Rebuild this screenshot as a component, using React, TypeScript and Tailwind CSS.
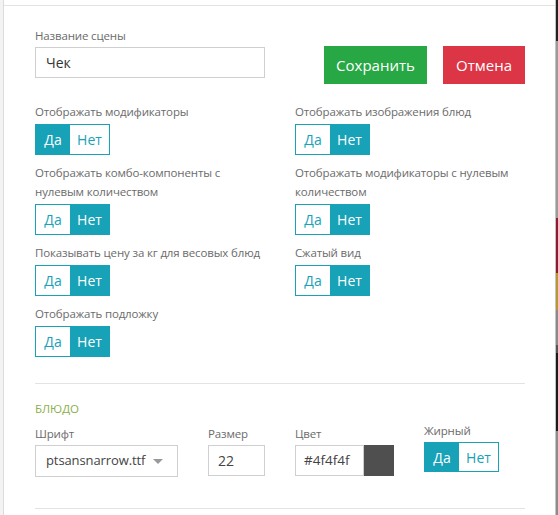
import React from "react";

const font = { fontFamily: '"Open Sans", "Noto Sans", sans-serif' };

function Toggle({ value }: { value: boolean }) {
  return (
    <div className="flex h-[31px] w-[75px] border border-[#17a2b8] text-[14px]">
      <div
        className={`flex w-[34px] items-center justify-center ${
          value ? "bg-[#17a2b8] text-white" : "bg-white text-[#17a2b8]"
        }`}
      >
        Да
      </div>
      <div
        className={`flex flex-1 items-center justify-center ${
          value ? "bg-white text-[#17a2b8]" : "bg-[#17a2b8] text-white"
        }`}
      >
        Нет
      </div>
    </div>
  );
}

function Option({ label, value }: { label: React.ReactNode; value: boolean }) {
  return (
    <div className="flex flex-col">
      <div className="mb-[3px] text-[11.5px] leading-[19px] tracking-[-0.15px] text-[#6b6b6b] whitespace-nowrap">
        {label}
      </div>
      <Toggle value={value} />
    </div>
  );
}

function Label({ children }: { children: React.ReactNode }) {
  return (
    <div className="mb-[2px] text-[11.5px] leading-[19px] tracking-[-0.15px] text-[#6b6b6b]">{children}</div>
  );
}

export default function App() {
  return (
    <div className="flex h-[515px] w-[558px] overflow-hidden bg-white" style={font}>
      <div className="w-[4px] border-r border-[#dcdcdc] bg-[#f3f3f3]" />

      <div className="flex-1 pt-[5px]">
        <div className="h-full border-t border-[#e3e3e3] pl-[31px] pr-[30px] pt-[20px]">
          {/* scene name + actions */}
          <div className="flex justify-between">
            <div className="w-[230px]">
              <Label>Название сцены</Label>
              <div className="flex h-[31px] items-center border border-[#cfcfcf] pl-[10px] text-[14px] text-[#333]">
                Чек
              </div>
            </div>
            <div className="mt-[20px] flex gap-[16px] text-[15px] text-white">
              <button className="flex h-[38px] w-[103px] items-center justify-center bg-[#28a745]">Сохранить</button>
              <button className="flex h-[38px] w-[82px] items-center justify-center bg-[#dc3545]">Отмена</button>
            </div>
          </div>

          {/* display options */}
          <div className="mt-[18px] grid grid-cols-[230px_230px] gap-x-[30px] gap-y-[8px]">
            <Option label="Отображать модификаторы" value={true} />
            <Option label="Отображать изображения блюд" value={false} />
            <Option
              label={
                <>
                  Отображать комбо-компоненты с
                  <br />
                  нулевым количеством
                </>
              }
              value={false}
            />
            <Option
              label={
                <>
                  Отображать модификаторы с нулевым
                  <br />
                  количеством
                </>
              }
              value={false}
            />
            <Option label="Показывать цену за кг для весовых блюд" value={false} />
            <Option label="Сжатый вид" value={false} />
            <Option label="Отображать подложку" value={false} />
          </div>

          <div className="mt-[26px] border-t border-[#e3e3e3]" />

          {/* dish font settings */}
          <div className="mt-[15px] text-[11.5px] leading-[19px] text-[#88b04b]">БЛЮДО</div>
          <div className="mt-[6px] flex gap-[30px]">
            <div className="w-[143px]">
              <Label>Шрифт</Label>
              <div className="flex h-[32px] items-center justify-between border border-[#cfcfcf] pl-[10px] pr-[14px] text-[13px] tracking-[-0.1px] text-[#444]">
                <span>ptsansnarrow.ttf</span>
                <span className="h-0 w-0 border-x-[5px] border-t-[5px] border-x-transparent border-t-[#999]" />
              </div>
            </div>
            <div className="w-[57px]">
              <Label>Размер</Label>
              <div className="flex h-[31px] items-center border border-[#cfcfcf] pl-[9px] text-[14px] text-[#444]">
                22
              </div>
            </div>
            <div>
              <Label>Цвет</Label>
              <div className="flex h-[31px]">
                <div className="flex w-[69px] items-center border border-[#cfcfcf] pl-[8px] text-[13.5px] text-[#444]">
                  #4f4f4f
                </div>
                <div className="w-[30px] bg-[#4f4f4f]" />
              </div>
            </div>
            <div className="-mt-[3px]">
              <Label>Жирный</Label>
              <div className="[&>div]:h-[30px]">
                <Toggle value={true} />
              </div>
            </div>
          </div>

          <div className="mt-[31px] border-t border-[#e3e3e3]" />
        </div>
      </div>

      <div className="w-[1px] bg-[#c4c4c4]" />
      <div className="flex w-[2px] flex-col">
        <div className="h-[41px] bg-[#222]" />
        <div className="h-[177px] bg-[#9a9a9a]" />
        <div className="h-[55px] bg-[#8e1b30]" />
        <div className="h-[37px] bg-[#b49a2e]" />
        <div className="h-[35px] bg-[#8a8a8a]" />
        <div className="h-[8px] bg-[#555]" />
        <div className="h-[78px] bg-[#1c1c1c]" />
        <div className="flex-1 bg-[#8c8c8c]" />
      </div>
    </div>
  );
}
